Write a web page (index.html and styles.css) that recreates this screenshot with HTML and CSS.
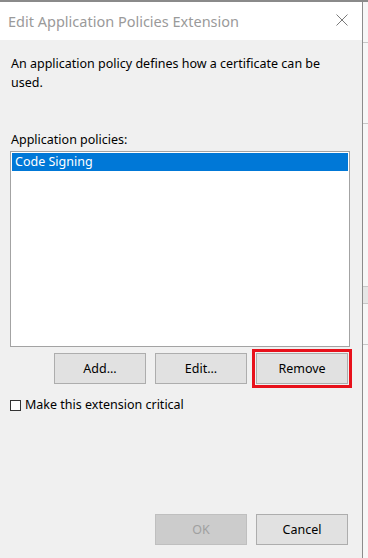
FILE: index.html
```html
<!DOCTYPE html>
<html lang="en">
<head>
    <meta charset="UTF-8">
    <meta name="viewport" content="width=device-width, initial-scale=1.0">
    <title>Edit Application Policies Extension</title>
    <link rel="stylesheet" href="styles.css">
</head>
<body>
    <div class="screen">
        <div class="dialog">
            <div class="titlebar">
                <span class="title">Edit Application Policies Extension</span>
                <svg class="close" width="12" height="12" viewBox="0 0 12 12">
                    <path d="M0.5 0.5 L11.5 11.5 M11.5 0.5 L0.5 11.5" stroke="#7a7a7a" stroke-width="1" fill="none"/>
                </svg>
            </div>

            <div class="content">
                <p class="intro">An application policy defines how a certificate can be used.</p>

                <label class="list-label">Application policies:</label>
                <div class="listbox">
                    <div class="list-item selected">Code Signing</div>
                </div>

                <div class="button-row">
                    <button>Add...</button>
                    <button>Edit...</button>
                    <button class="highlight">Remove</button>
                </div>

                <div class="check-row">
                    <span class="checkbox"></span>
                    <span>Make this extension critical</span>
                </div>

                <div class="footer">
                    <button disabled>OK</button>
                    <button>Cancel</button>
                </div>
            </div>
        </div>

        <!-- window behind the dialog -->
        <div class="backdrop">
            <div class="bg-row"></div>
            <div class="bg-row tall"></div>
            <div class="bg-row mid"></div>
            <div class="bg-row grey"></div>
            <div class="bg-row"></div>
        </div>
    </div>
</body>
</html>
```

FILE: styles.css
```css
body {
    margin: 0;
    font-family: "Noto Sans", "Open Sans", sans-serif;
    font-size: 12.5px;
    color: #000;
    background-color: #f0f0f0;
}
.screen {
    display: flex;
    width: 368px;
    height: 558px;
    overflow: hidden;
    border-top: 2px solid #8a8a8a;
    box-sizing: border-box;
}
.dialog {
    width: 362px;
    flex-shrink: 0;
    display: flex;
    flex-direction: column;
    background-color: #f0f0f0;
    border-right: 1px solid #8c8c8c;
}
.titlebar {
    height: 38px;
    background-color: #fff;
    display: flex;
    align-items: center;
    justify-content: space-between;
    padding: 0 14px 0 8px;
}
.title {
    font-size: 14.5px;
    color: #9a9a9a;
}
.close {
    margin-top: -2px;
}
.content {
    flex: 1;
    display: flex;
    flex-direction: column;
    padding: 14px 12px 0 10px;
}
.intro {
    margin: 0 0 0 1px;
    width: 330px;
    line-height: 19px;
}
.list-label {
    margin: 39px 0 2px 1px;
    line-height: 18px;
}
.listbox {
    height: 192px;
    background-color: #fff;
    border: 1px solid #a3a3a3;
    padding: 1px;
}
.list-item {
    height: 18px;
    line-height: 18px;
    padding-left: 3px;
}
.list-item.selected {
    background-color: #0078d7;
    color: #fff;
}
.button-row {
    display: flex;
    justify-content: flex-end;
    gap: 9px;
    margin-top: 6px;
    padding-right: 2px;
}
button {
    width: 92px;
    height: 31px;
    font-family: inherit;
    font-size: 12.5px;
    color: #000;
    background-color: #e1e1e1;
    border: 1px solid #adadad;
    border-radius: 0;
    padding: 0;
}
button:disabled {
    background-color: #cccccc;
    border-color: #bfbfbf;
    color: #a0a0a0;
}
.highlight {
    outline: 3px solid #e8111b;
    outline-offset: 1px;
}
.check-row {
    display: flex;
    align-items: center;
    gap: 4px;
    margin-top: 12px;
    line-height: 18px;
}
.checkbox {
    width: 9px;
    height: 9px;
    border: 1px solid #333;
    background-color: #fff;
}
.footer {
    display: flex;
    justify-content: flex-end;
    gap: 9px;
    margin-top: auto;
    margin-bottom: 13px;
    padding-right: 2px;
}
.backdrop {
    flex: 1;
    display: flex;
    flex-direction: column;
    background-color: #f7f7f7;
}
.bg-row {
    height: 40px;
    border-bottom: 1px solid #c8c8c8;
}
.bg-row.tall {
    height: 80px;
}
.bg-row.mid {
    height: 162px;
}
.bg-row.grey {
    height: 16px;
    background-color: #e6e6e6;
}
```
